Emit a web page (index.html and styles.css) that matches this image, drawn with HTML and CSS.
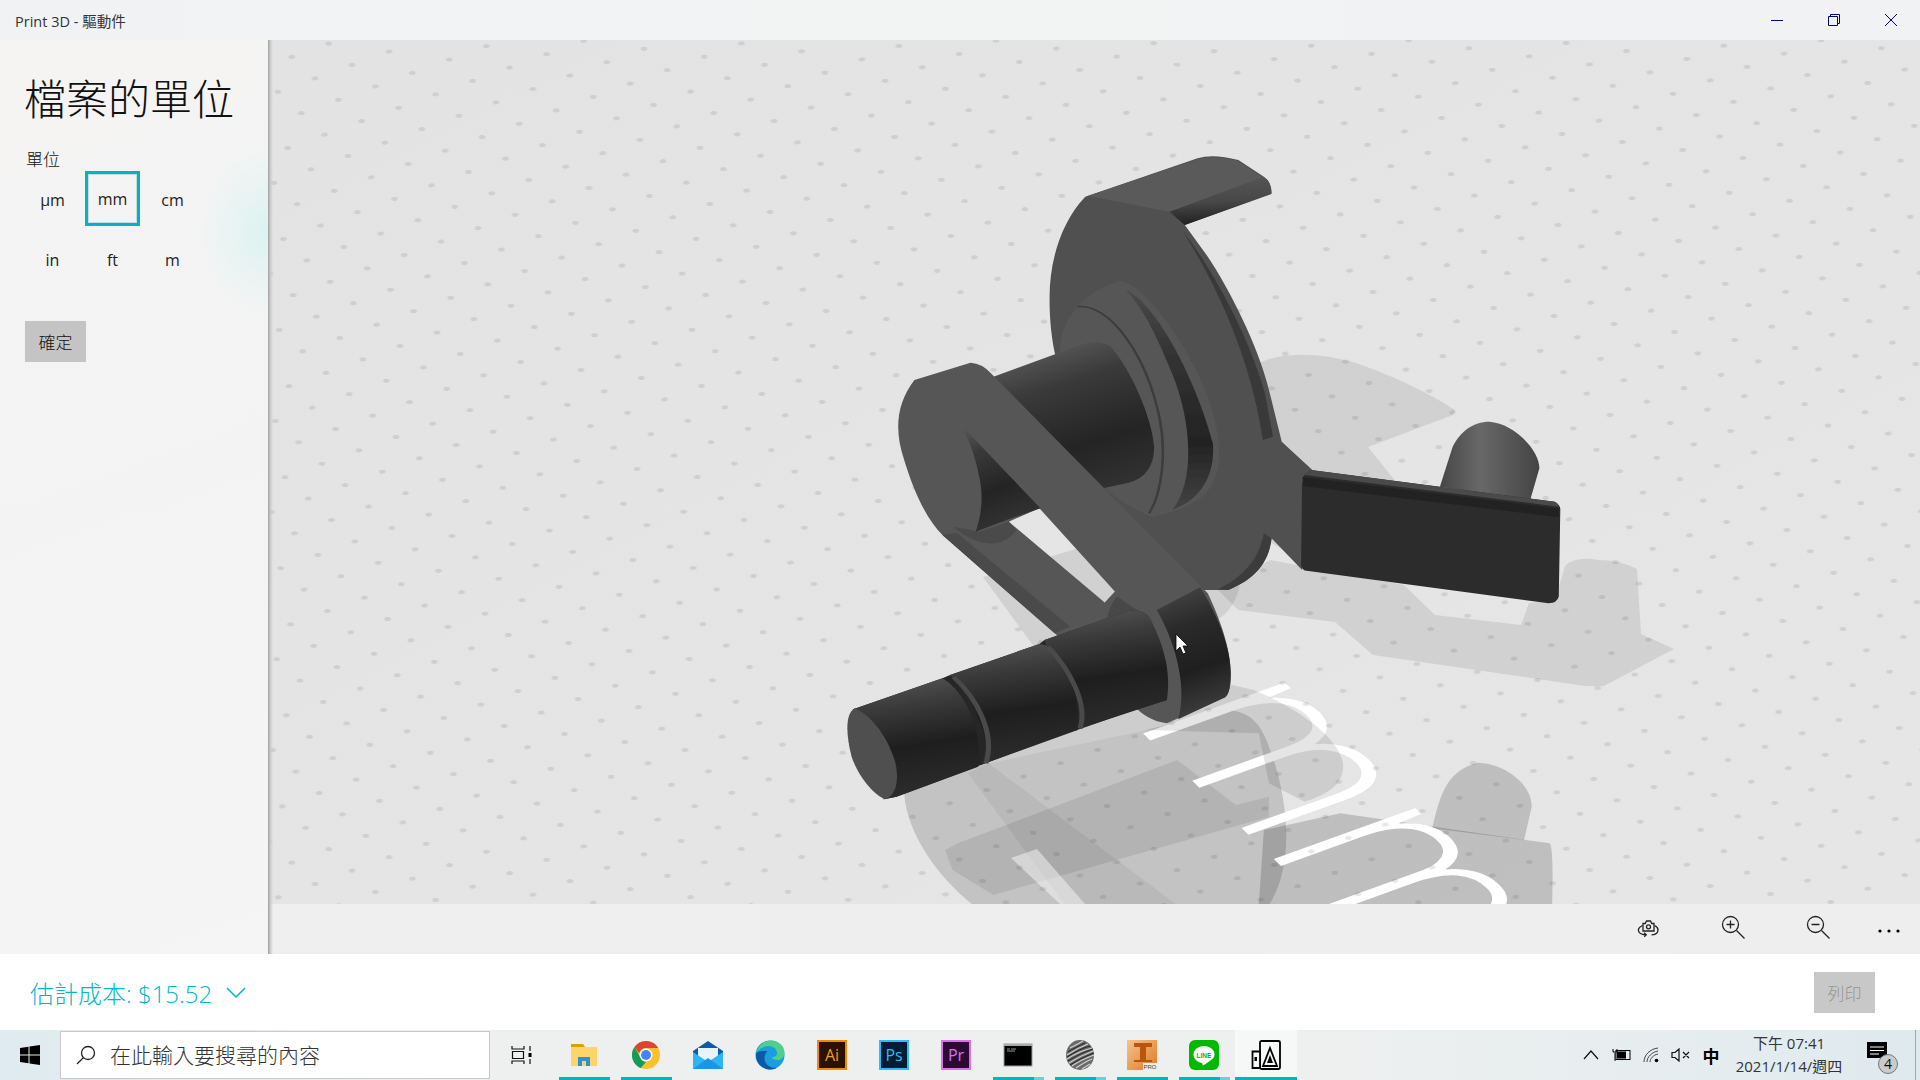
FILE: index.html
```html
<!DOCTYPE html>
<html lang="zh-Hant">
<head>
<meta charset="utf-8">
<title>Print 3D - 驅動件</title>
<link rel="stylesheet" href="styles.css">
</head>
<body>
<div class="app">
  <header class="titlebar">
    <span class="title-text">Print 3D - 驅動件</span>
    <div class="win-controls">
      <button class="win-btn"><svg width="12" height="12" viewBox="0 0 12 12"><path d="M0 6.500h12" class="win-stroke"/></svg></button>
      <button class="win-btn"><svg width="12" height="12" viewBox="0 0 12 12"><path d="M.5 2.500h9v9h-9zM2.500 2.500V.5h9v9h-2" class="win-stroke"/></svg></button>
      <button class="win-btn"><svg width="12" height="12" viewBox="0 0 12 12"><path d="M0 0l12 12M12 0L0 12" class="win-stroke"/></svg></button>
    </div>
  </header>

  <main class="main">
    <aside class="sidebar">
      <h1 class="side-title">檔案的單位</h1>
      <div class="side-label">單位</div>
      <div class="unit-grid">
        <div class="unit">µm</div>
        <div class="unit unit-on">mm</div>
        <div class="unit">cm</div>
        <div class="unit">in</div>
        <div class="unit">ft</div>
        <div class="unit">m</div>
      </div>
      <button class="ok-btn">確定</button>
    </aside>

    <section class="workspace">
      <div class="viewport">
        <svg class="scene" width="1652" height="864" viewBox="268 40 1652 864" xmlns="http://www.w3.org/2000/svg">
          <defs>
            <pattern id="dots" patternUnits="userSpaceOnUse" width="100" height="100" patternTransform="matrix(.603 .08 -.37 .134 943.35 134.3)">
              <ellipse cx="0" cy="0" rx="3.200" ry="2.100" fill="#000" fill-opacity=".09" transform="translate(50 50) matrix(1.214 -.725 3.351 5.462 0 0)"/>
            </pattern>
            <linearGradient id="cyl" x1=".42" y1="0" x2=".58" y2="1">
              <stop offset="0" stop-color="#525252"/><stop offset=".22" stop-color="#3a3a3a"/><stop offset=".55" stop-color="#1e1e1e"/><stop offset="1" stop-color="#2e2e2e"/>
            </linearGradient>
            <linearGradient id="shaft" x1=".35" y1="0" x2=".65" y2="1">
              <stop offset="0" stop-color="#5a5a5a"/><stop offset=".25" stop-color="#3a3a3a"/><stop offset=".62" stop-color="#242424"/><stop offset="1" stop-color="#363636"/>
            </linearGradient>
            <linearGradient id="peg" x1="0" y1="0" x2="1" y2="0">
              <stop offset="0" stop-color="#464646"/><stop offset=".4" stop-color="#686868"/><stop offset="1" stop-color="#444"/>
            </linearGradient>
            <linearGradient id="tabEnd" x1=".45" y1="0" x2=".55" y2="1">
              <stop offset="0" stop-color="#555"/><stop offset=".5" stop-color="#484848"/><stop offset="1" stop-color="#1d1d1d"/>
            </linearGradient>
            <linearGradient id="boss" x1="0" y1="0" x2=".2" y2="1">
              <stop offset="0" stop-color="#4a4a4a"/><stop offset=".35" stop-color="#2a2a2a"/><stop offset=".7" stop-color="#1f1f1f"/><stop offset="1" stop-color="#3a3a3a"/>
            </linearGradient>
            <linearGradient id="band" x1="0" y1="0" x2="0" y2="1">
              <stop offset="0" stop-color="#4a4a4a"/><stop offset=".3" stop-color="#333"/><stop offset=".7" stop-color="#232323"/><stop offset="1" stop-color="#444"/>
            </linearGradient>
            <linearGradient id="floor" x1="0" y1="0" x2="1" y2="1">
              <stop offset="0" stop-color="#e3e3e3"/><stop offset="1" stop-color="#e6e6e6"/>
            </linearGradient>
            <filter id="soft" x="-5%" y="-5%" width="110%" height="110%"><feGaussianBlur stdDeviation="1.400"/></filter>
          </defs>
          <rect x="268" y="40" width="1652" height="864" fill="url(#floor)"/>

          <!-- reflection of the model on the floor, under the floor text -->
          <g transform="translate(820 500) scale(.5102 .3333)" fill="#000">
            <path fill-opacity=".15" d="M165,880 C170,1000 230,1130 300,1215 L880,1215 C930,1100 920,900 880,740 C860,650 830,630 790,630 L640,690 L300,800Z"/>
            <path fill-opacity=".08" d="M245,1050 L270,1030 L700,780 L815,915 L880,890 L880,950 L340,1185 L260,1110Z"/>
            <path fill-opacity=".05" d="M290,820 L330,790 L700,1215 L480,1215Z"/>
            <path fill-opacity=".17" d="M860,1215 L870,990 L1020,940 L1430,1030 Q1438,1040 1435,1215Z"/>
            <path fill-opacity=".17" d="M1200,985 C1215,880 1230,810 1290,788 C1340,790 1395,850 1395,920 L1380,1020Z"/>
          </g>

          <text class="floor-text" transform="matrix(1.48 1.42 -2.67 .96 1130 721)" x="0" y="0">mm</text>

          <!-- shadows on the floor, over the text -->
          <g fill="#000" fill-opacity=".085">
            <path d="M1259,363 C1280,352 1320,352 1356,363 C1397,377 1432,395 1455,410 L1453,415 L1368,447 L1397,483 L1300,560 L1200,500Z"/>
            <path d="M1218,590 L1238,610 L1335,622 L1373,655 L1585,686 L1604,686 L1674,649 L1641,634 L1637,569 Q1620,560 1598,560 Q1575,556 1565,566 L1555,600 L1529,603 L1521,625 L1435,615 L1404,585 L1270,560Z"/>
            <path d="M983,577 L1105,540 L1240,560 C1245,600 1225,625 1195,625 L1080,690 L1040,655Z"/>
          </g>
          <g transform="translate(820 500) scale(.5102 .3333)" fill="#000">
            <path fill-opacity=".1" d="M430,420 L850,570 C960,640 1020,730 1025,790 C1028,850 1000,880 950,905 L880,850 L860,700 L640,690 L300,800Z"/>
          </g>
          <path d="M1011,858 L1037,849 L1085,904 L1060,904Z" fill="#fff" fill-opacity=".45"/>
          <rect x="268" y="40" width="1652" height="864" fill="url(#dots)"/>

          <!-- model, coordinates of a 1.96 x 3 measuring grid -->
          <g transform="translate(820 130) scale(.5102 .3333)">
            <path fill="url(#peg)" d="M1215,1070 L1240,950 C1255,905 1280,875 1312,875 C1360,880 1410,960 1410,1015 L1392,1110Z"/>
            <path fill="#505050" d="M520,200 L740,85 Q770,70 820,90 L870,140 Q885,155 885,190 L715,285 L760,380 C800,470 860,650 880,780 L905,935 L965,1020 L945,1040 L945,1320 L885,1225 C880,1300 850,1350 800,1380 L745,1380 L500,1100 L462,680 C450,600 450,530 450,500 C450,400 470,280 520,200Z"/>
            <path fill="#5a5a5a" d="M525,198 L740,88 Q770,74 818,92 L868,142 L685,245Z"/>
            <path fill="url(#tabEnd)" d="M685,245 L870,142 Q885,155 885,192 L715,285Z"/>
            <path fill="#393939" d="M712,305 C780,440 845,640 872,790 L888,920 L868,930 C850,740 800,520 712,305Z"/>
            <path fill="#3c3c3c" d="M885,1225 C880,1300 850,1350 800,1380 L780,1378 C830,1340 860,1290 870,1210Z"/>
            <path fill="#565656" d="M470,650 C475,560 520,480 590,452 C640,470 720,640 760,800 C785,910 790,1000 770,1060 C750,1120 700,1145 650,1160 C600,1130 540,1080 470,900Z"/>
            <path fill="url(#band)" filter="url(#soft)" d="M600,480 C660,520 740,760 770,940 C775,1040 745,1110 690,1140 C735,1060 730,880 690,730 C660,620 640,550 600,480Z"/>
            <path fill="none" stroke="#3c3c3c" stroke-width="5" filter="url(#soft)" d="M505,530 C570,520 640,680 665,860 C680,970 670,1090 645,1150"/>
            <path fill="url(#shaft)" d="M340,740 L510,645 Q545,625 570,650 C610,720 650,860 655,950 C655,1020 630,1050 600,1060 L555,1075 L420,1140Z"/>
            <path fill="#2c2c2c" d="M945,1040 L962,1020 L1440,1115 Q1452,1125 1451,1140 L1448,1400 Q1445,1420 1428,1420 L950,1322 Q942,1315 943,1300Z"/>
            <path fill="#4a4a4a" d="M962,1020 L1440,1115 Q1447,1120 1448,1130 L950,1035Z"/>
            <path fill="#1e1e1e" d="M948,1042 L1448,1136 L1448,1162 L946,1068Z" opacity=".7"/>
            <path fill="#565656" fill-rule="evenodd" d="M185,750 L295,698 Q318,700 335,730 L760,1390 C785,1470 805,1560 805,1630 C805,1680 800,1700 790,1705 L680,1780 C650,1775 630,1750 620,1735 L460,1510 L240,1215 C210,1170 185,1090 165,990 C145,900 150,820 185,750Z M370,1175 L430,1135 L578,1385 L558,1418Z"/>
            <path fill="#4a4a4a" d="M240,1215 L460,1510 L490,1490 L268,1208Z"/>
            <path fill="#4a4a4a" d="M262,1190 C285,1225 320,1245 345,1240 C360,1235 372,1225 385,1200 L370,1175 L312,1205Z"/>
            <path fill="url(#shaft)" d="M262,862 L432,1135 L370,1168 L305,1205 C318,1150 320,1090 312,1040 C302,960 285,900 262,862Z"/>
            <path fill="url(#boss)" d="M660,1440 L745,1372 C785,1470 805,1560 805,1630 C805,1680 800,1700 790,1705 L702,1768 C718,1690 705,1560 660,1440Z"/>
            <path fill="#484848" d="M565,1490 C560,1450 570,1425 582,1400 L650,1470 L650,1560Z"/>
          </g>

          <g transform="translate(820 500) scale(.5102 .3333)">
            <path fill="#262626" d="M65,628 L240,535 L255,525 L430,432 L440,420 L605,332 Q630,325 645,350 L680,600 L520,680 L495,692 L315,795 L305,802 L150,890 L125,898Z"/>
            <path fill="url(#cyl)" d="M440,420 L605,332 Q630,325 645,350 C670,420 690,510 680,600 L620,628 L500,692Z"/>
            <path fill="url(#cyl)" d="M255,525 L430,432 Q455,435 470,470 C495,540 510,620 505,690 L315,795 C340,720 300,600 255,525Z"/>
            <path fill="none" stroke="#4a4a4a" stroke-width="10" d="M447,440 C490,510 525,610 510,685"/>
            <path fill="url(#cyl)" d="M65,628 L240,535 C280,570 320,680 310,800 L150,890 L125,898 C140,820 120,700 65,628Z"/>
            <path fill="none" stroke="#4a4a4a" stroke-width="10" d="M262,532 C305,590 345,700 325,790"/>
            <path fill="#4f4f4f" d="M68,625 C50,640 50,700 62,770 C75,830 105,885 128,898 C150,885 155,840 148,790 C135,720 105,650 68,625Z"/>
          </g>
          <path class="cursor" d="M1176,634 L1176,651 L1180,647 L1183,654 L1186,653 L1183,646 L1188,646Z"/>
        </svg>
      </div>
      <div class="toolbar">
        <button class="tool-btn"><svg width="24" height="24" viewBox="0 0 24 24" class="ico"><path d="M7 8.500h2.200L10.500 6h4l1.300 2.500H18v7.500H7z"/><circle cx="12.500" cy="11.800" r="2"/><path d="M6.500 10.500C3 12 1.500 14.500 3 17c1 1.800 4 2.800 7 2.800M8 17.800l2.300 2-2 2M18.500 10.500c3 1.500 4.200 4 3 6.500-.8 1.600-3.500 2.800-6 2.800"/></svg></button>
        <button class="tool-btn"><svg width="24" height="24" viewBox="0 0 24 24" class="ico"><circle cx="9.500" cy="9.500" r="8"/><path d="M15.500 15.500l8 8M5.500 9.500h8M9.500 5.500v8"/></svg></button>
        <button class="tool-btn"><svg width="24" height="24" viewBox="0 0 24 24" class="ico"><circle cx="9.500" cy="9.500" r="8"/><path d="M15.500 15.500l8 8M5.500 9.500h8"/></svg></button>
        <button class="tool-btn tool-more"><svg width="24" height="24" viewBox="0 0 24 24"><circle cx="3" cy="16" r="1.600"/><circle cx="12" cy="16" r="1.600"/><circle cx="21" cy="16" r="1.600"/></svg></button>
      </div>
    </section>
  </main>

  <footer class="costbar">
    <div class="cost">估計成本: $15.52<svg class="chev" width="20" height="11" viewBox="0 0 20 11"><path d="M1 1l9 9 9-9"/></svg></div>
    <button class="print-btn">列印</button>
  </footer>

  <nav class="taskbar">
    <div class="start"><svg width="20" height="20" viewBox="0 0 20 20"><path d="M0 3l8.500-1.200v7.700H0zM9.500 1.600L20 0v9.500H9.500zM0 10.500h8.500v7.700L0 17zM9.500 10.500H20V20L9.500 18.400z" fill="#000"/></svg></div>
    <div class="search">
      <svg class="search-ico" width="20" height="20" viewBox="0 0 20 20"><circle cx="12" cy="8" r="6.500"/><path d="M7.500 12.500L1 19"/></svg>
      <span class="search-text">在此輸入要搜尋的內容</span>
    </div>
    <div class="taskview"><svg width="22" height="20" viewBox="0 0 22 20" class="ico-thin"><path d="M1 1v3h12V1M1 19v-3h12v3M1.500 6.500h11v7h-11zM19 1v5M19 14v5"/><rect x="17.500" y="8" width="3" height="4" fill="#000" stroke="none"/></svg></div>

    <div class="tb-item tb-open">
      <svg width="30" height="30" viewBox="0 0 30 30"><path d="M2 4h12l2 3h12v19H2z" fill="#fbd56a"/><path d="M2 4h12l2 3H2z" fill="#e0a000"/><path d="M9 26v-9h12v9h-4v-5h-4v5z" fill="#2f8fd8"/></svg>
    </div>
    <div class="tb-item tb-open">
      <svg width="30" height="30" viewBox="0 0 30 30"><circle cx="15" cy="15" r="14" fill="#fbc02d"/><path d="M15 1a14 14 0 0 1 12.100 7H15a7 7 0 0 0-6.800 5.200L3.500 7A14 14 0 0 1 15 1z" fill="#db4437"/><path d="M3.500 7l6 10.500A7 7 0 0 0 15 22l-5.300 6A14 14 0 0 1 3.500 7z" fill="#0f9d58"/><circle cx="15" cy="15" r="6.500" fill="#fff"/><circle cx="15" cy="15" r="5" fill="#4285f4"/></svg>
    </div>
    <div class="tb-item">
      <svg width="30" height="30" viewBox="0 0 30 30"><path d="M0 11L15 1l15 10v18H0z" fill="#0a5ea8"/><path d="M5 8h20v10l-10 6-10-6z" fill="#e8f4fc"/><path d="M0 12l15 10 15-10v17H0z" fill="#2fb4f2"/><path d="M0 29l15-11 15 11z" fill="#1a96e4"/></svg>
    </div>
    <div class="tb-item">
      <svg width="30" height="30" viewBox="0 0 30 30"><circle cx="15" cy="15" r="14.500" fill="#1b9de2"/><path d="M1 14C3 5 9 .5 16 .5c8 0 13.500 6 13.500 12 0 5-3.500 7.500-7 7.500-3 0-5.500-1-5.500-3 3 0 5-1 5-4 0-4-4-7-8-7C8 6.500 3 9 1 14z" fill="#4ed08a"/><path d="M1 15c0 8 6 14.500 14.500 14.500 3 0 5-.7 7-2C16 29 9.500 25 9.500 18c0-3 1-5 3-7C7 11 1 11 1 15z" fill="#0c59a4"/></svg>
    </div>
    <div class="tb-item"><svg width="30" height="30" viewBox="0 0 30 30"><rect x="1" y="1" width="28" height="28" fill="#2a1200" stroke="#f08a00" stroke-width="2"/><text x="15" y="21" class="app-letter" fill="#f59a1b">Ai</text></svg></div>
    <div class="tb-item"><svg width="30" height="30" viewBox="0 0 30 30"><rect x="1" y="1" width="28" height="28" fill="#001d33" stroke="#2fbdf5" stroke-width="2"/><text x="15" y="21" class="app-letter" fill="#2fbdf5">Ps</text></svg></div>
    <div class="tb-item"><svg width="30" height="30" viewBox="0 0 30 30"><rect x="1" y="1" width="28" height="28" fill="#2a0a33" stroke="#d872e6" stroke-width="2"/><text x="15" y="21" class="app-letter" fill="#d872e6">Pr</text></svg></div>
    <div class="tb-item tb-open tb-multi"><svg width="30" height="30" viewBox="0 0 30 30"><rect x="1" y="4" width="28" height="22" fill="#000" stroke="#9a9a9a"/><rect x="1" y="4" width="28" height="2" fill="#aaa"/><path d="M4 9h3M8 9h5M4 11h8" stroke="#bbb" stroke-width=".8"/></svg></div>
    <div class="tb-item tb-open tb-multi"><svg width="30" height="30" viewBox="0 0 30 30"><ellipse cx="15" cy="15" rx="14" ry="15" fill="#6a6a6a"/><g stroke="#d0d0d0" stroke-width="1.200" fill="none"><path d="M5 8C9 6 13 4 18 1M2 15C8 11 15 7 23 4M2 19C10 14 18 10 27 8M4 23C12 18 20 14 28 11M7 26C14 21 21 18 29 15M11 28C17 24 22 21 27 19M17 29l8-5"/></g><g stroke="#222" stroke-width="1" fill="none"><path d="M3 12C9 8 14 6 20 3M2 17C10 12 17 8 25 6M3 21C11 16 19 12 28 9M5 25C13 20 21 16 29 13"/></g></svg></div>
    <div class="tb-item tb-open"><svg width="30" height="30" viewBox="0 0 30 30"><defs><linearGradient id="inv" x1="0" y1="0" x2="1" y2="1"><stop offset="0" stop-color="#f4c48f"/><stop offset="1" stop-color="#e07a20"/></linearGradient></defs><rect width="30" height="30" fill="url(#inv)"/><path d="M7 3h18v4h-6v13h6v2H7v-2h6V7H7z" fill="#b8560f"/><rect x="16" y="23" width="14" height="7" fill="#eee"/><text x="23" y="29" class="app-tiny">PRO</text></svg></div>
    <div class="tb-item tb-open tb-multi"><svg width="30" height="30" viewBox="0 0 30 30"><rect width="30" height="30" rx="6" fill="#00b900"/><path d="M15 6c-6 0-10.500 3.800-10.500 8.500 0 4.200 3.500 7.700 8.300 8.400 1.200.2.400 2.300.8 2.500.8.300 4.800-2.700 7.500-4.700 2.700-1.700 4.400-3.700 4.400-6.200C25.500 9.800 21 6 15 6z" fill="#fff"/><text x="15" y="17.500" class="app-line">LINE</text></svg></div>
    <div class="tb-item tb-open tb-active"><svg width="30" height="30" viewBox="0 0 30 30" class="ico-p3d"><rect x="9" y="1" width="20" height="28" rx="1.500"/><path d="M1.500 11.500H9V28H1.500z" fill="#f6f7f7"/><rect x="3.500" y="17" width="2.500" height="4" fill="#000" stroke="none"/><path d="M19 8l7 18H12z"/><path d="M19 15l3 8h-6z" fill="#000" stroke="none"/></svg></div>

    <div class="tray">
      <div class="tray-ico"><svg width="16" height="10" viewBox="0 0 16 10" class="ico-thin"><path d="M1 9l7-8 7 8"/></svg></div>
      <div class="tray-ico"><svg width="20" height="14" viewBox="0 0 20 14"><path d="M2 1v3h4V1M4 5v8" stroke="#000" fill="none"/><rect x="5" y="2.500" width="14" height="9" fill="none" stroke="#000"/><rect x="6" y="3.500" width="9" height="7" fill="#000"/></svg></div>
      <div class="tray-ico"><svg width="16" height="16" viewBox="0 0 16 16" class="ico-wifi"><path d="M1 15C1 8 7 2 15 1M4 15c0-5 5-10 11-11M7 15c0-3 3-7 8-8"/><circle cx="13.500" cy="13.500" r="1.800" fill="#000" stroke="none"/></svg></div>
      <div class="tray-ico"><svg width="20" height="14" viewBox="0 0 20 14" class="ico-thin"><path d="M1 4.500h3L8 1v12L4 9.500H1zM12 4l6 6M18 4l-6 6"/></svg></div>
      <div class="tray-ime">中</div>
      <div class="clock"><div>下午 07:41</div><div>2021/1/14/週四</div></div>
      <div class="notif">
        <svg width="21" height="18" viewBox="0 0 21 18"><path d="M0 0h20v16H0z" fill="#000"/><path d="M3 5h14M3 8.500h14M3 12h9" stroke="#fff"/></svg>
        <span class="notif-badge">4</span>
      </div>
      <div class="show-desktop"></div>
    </div>
  </nav>
</div>
</body>
</html>
```
FILE: styles.css
```css
* { box-sizing: border-box; }
html, body { margin: 0; padding: 0; width: 1920px; height: 1080px; overflow: hidden; }
body { font-family: "Open Sans", "Noto Sans CJK TC", sans-serif; color: #111; background: #fff; }
button { font: inherit; border: 0; padding: 0; background: none; color: inherit; }

.app { width: 1920px; height: 1080px; display: flex; flex-direction: column; }

.titlebar { height: 40px; flex: none; display: flex; align-items: center; justify-content: space-between; padding-left: 15px; background: linear-gradient(90deg, #f1f2f3, #f2f3f3 50%, #f0f2f3); }
.title-text { font-size: 14.500px; color: #333; }
.win-controls { display: flex; }
.win-btn { width: 57px; height: 40px; display: flex; align-items: center; justify-content: center; }
.win-btn svg { margin-left: -2px; }
.win-stroke { fill: none; stroke: #000080; stroke-width: 1; }

.main { flex: 1; display: flex; min-height: 0; }

.sidebar { width: 268px; flex: none; position: relative; z-index: 1; padding: 31px 0 0 24px; background: radial-gradient(ellipse 70px 85px at 268px 190px, #dcf3f1, rgba(222,243,241,0)), linear-gradient(160deg, #f5f4f3, #f3f3f4 50%, #f5f5f5); }
.sidebar::after { content: ""; position: absolute; top: 0; bottom: 0; left: 100%; width: 5px; background: linear-gradient(90deg, #9c9c9c, #c8c8c8 40%, rgba(228,228,228,0)); }
.side-title { margin: 0; font-size: 42px; line-height: 56px; font-weight: 300; color: #111; white-space: nowrap; }
.side-label { margin: 22px 0 0 2px; font-size: 17px; line-height: 22px; font-weight: 300; }
.unit-grid { display: grid; grid-template-columns: repeat(3, 55px); grid-auto-rows: 55px; gap: 5px; margin-left: 1px; }
.unit { display: flex; align-items: center; justify-content: center; padding-top: 2px; font-size: 16px; color: #222; }
.unit-on { padding-top: 0; border: 3px solid #00b4c5; outline: 1px solid #cfd8da; outline-offset: -4px; }
.ok-btn { display: block; margin: 35px 0 0 1px; width: 61px; height: 41px; background: #c4c4c4; font-size: 17px; font-weight: 300; color: #111; }

.workspace { flex: 1; display: flex; flex-direction: column; min-width: 0; }
.viewport { height: 864px; flex: none; overflow: hidden; }
.scene { display: block; }
.floor-text { font-family: "Open Sans", sans-serif; font-weight: 300; font-size: 100px; fill: #fff; }
.cursor { fill: #fff; stroke: #000; stroke-width: .8; }

.toolbar { height: 50px; flex: none; display: flex; align-items: center; justify-content: flex-end; padding: 0 11px 4px 0; background: linear-gradient(90deg, #efefef, #eeeeee); }
.tool-btn { width: 40px; height: 40px; margin-left: 45px; display: flex; align-items: center; justify-content: center; }
.tool-more { margin-left: 31px; }
.ico { fill: none; stroke: #222; stroke-width: 1.300; }

.costbar { height: 76px; flex: none; display: flex; align-items: center; justify-content: space-between; padding: 0 45px 0 30px; background: #fff; }
.cost { display: flex; align-items: center; font-size: 24px; font-weight: 300; color: #00b7c3; }
.chev { margin-left: 14px; fill: none; stroke: #00b7c3; stroke-width: 1.500; }
.print-btn { width: 61px; height: 41px; background: #c8c8c8; color: #969696; font-size: 17px; font-weight: 300; }

.taskbar { height: 50px; flex: none; display: flex; align-items: stretch; background: linear-gradient(90deg, #dfebf0, #eef0f0 25%, #eef0f0 70%, #dfeaee); }
.start { width: 60px; flex: none; display: flex; align-items: center; justify-content: center; }
.search { width: 430px; flex: none; display: flex; align-items: center; margin: 1px 0; padding-left: 15px; background: #fff; border: 1px solid #c9c9c9; }
.search-ico { fill: none; stroke: #222; stroke-width: 1.300; }
.search-text { margin: 0 0 2px 14px; font-size: 21px; font-weight: 300; color: #333; white-space: nowrap; }
.taskview { width: 63px; flex: none; display: flex; align-items: center; justify-content: center; }
.ico-thin { fill: none; stroke: #111; stroke-width: 1.200; }

.tb-item { width: 62px; flex: none; position: relative; display: flex; align-items: center; justify-content: center; }
.tb-open::after { content: ""; position: absolute; left: 6px; right: 5px; bottom: 0; height: 3px; background: #00b4c5; }
.tb-multi::before { content: ""; position: absolute; right: 5px; width: 10px; bottom: 0; height: 3px; z-index: 1; background: #66d2dc; }
.tb-active { background: #f6f7f7; }
.tb-active::after { left: 0; right: 0; }
.app-letter { font-family: "Open Sans", sans-serif; font-size: 16px; text-anchor: middle; }
.app-tiny { font-family: "Liberation Sans", sans-serif; font-size: 6px; fill: #444; text-anchor: middle; }
.app-line { font-family: "Liberation Sans", sans-serif; font-size: 6.500px; font-weight: 700; fill: #00b900; text-anchor: middle; }
.ico-p3d { fill: none; stroke: #000; stroke-width: 1.800; }

.tray { margin-left: auto; display: flex; align-items: stretch; }
.tray-ico, .tray-ime { width: 30px; display: flex; align-items: center; justify-content: center; }
.ico-wifi { fill: none; stroke: #444; stroke-width: 1; }
.tray-ime { font-size: 17px; font-weight: 700; color: #000; }
.clock { width: 126px; display: flex; flex-direction: column; justify-content: center; align-items: center; font-size: 15px; line-height: 23px; color: #333; }
.notif { width: 54px; margin-right: 9px; position: relative; display: flex; align-items: center; justify-content: center; }
.notif svg { margin: -8px 0 0 -4px; }
.notif-badge { position: absolute; left: 26px; top: 24px; width: 20px; height: 20px; border-radius: 50%; border: 1px solid #777; background: #c8cccd; display: flex; align-items: center; justify-content: center; font-size: 14px; line-height: 1; color: #111; }
.show-desktop { width: 5px; border-left: 1px solid #9aa; }
```
